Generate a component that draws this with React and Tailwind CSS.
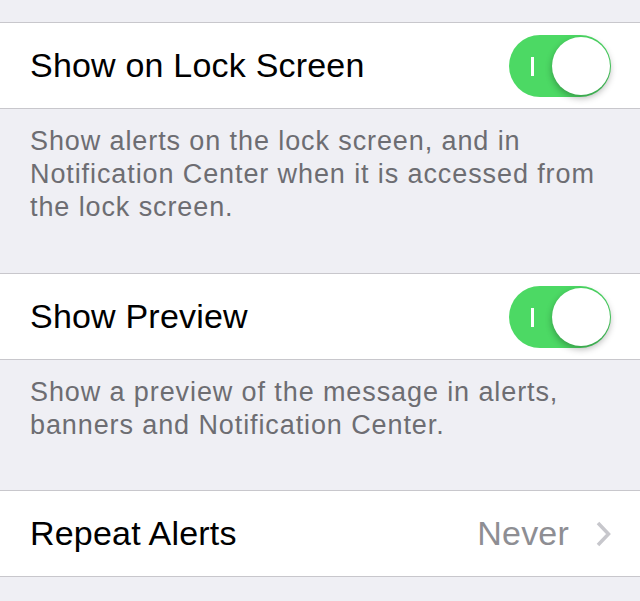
import React from 'react';

const font = { fontFamily: '"Liberation Sans", Arial, sans-serif' };

function Toggle() {
  return (
    <div className="relative w-[102px] h-[62px] rounded-full bg-[#4cd964] shrink-0">
      <div className="absolute left-[22px] top-[22px] w-[3px] h-[19px] bg-white" />
      <div className="absolute right-[1px] top-[2px] w-[58px] h-[58px] rounded-full bg-white shadow-[0_3px_7px_rgba(0,0,0,0.3)]" />
    </div>
  );
}

function Row({ label, children }) {
  return (
    <div className="flex items-center justify-between h-[87px] bg-white border-y border-[#c8c7cc] pl-[30px] pr-[30px]">
      <span className="text-[34px] text-black tracking-[0.2px]">{label}</span>
      {children}
    </div>
  );
}

function Footer({ children, h }) {
  return (
    <div className={`pl-[30px] pr-[20px] pt-[16px] ${h}`}>
      <p className="text-[27px] leading-[33px] tracking-[0.9px] text-[#6d6d72]">{children}</p>
    </div>
  );
}

export default function App() {
  return (
    <div className="w-[640px] h-[601px] bg-[#efeff4] overflow-hidden" style={font}>
      <div className="h-[22px]" />
      <Row label="Show on Lock Screen">
        <div className="-mr-[1px]"><Toggle /></div>
      </Row>
      <Footer h="h-[164px]">
        Show alerts on the lock screen, and in Notification Center when it is accessed from the lock screen.
      </Footer>
      <Row label="Show Preview">
        <div className="-mr-[1px]"><Toggle /></div>
      </Row>
      <Footer h="h-[130px]">
        Show a preview of the message in alerts, banners and Notification Center.
      </Footer>
      <Row label="Repeat Alerts">
        <div className="flex items-center gap-[27px] -mr-[1px]">
          <span className="text-[34px] text-[#8e8e93] tracking-[0.2px]">Never</span>
          <svg width="15" height="26" viewBox="0 0 15 26">
            <path d="M2 2 L12.5 13 L2 24" fill="none" stroke="#c7c7cc" strokeWidth="3.5" />
          </svg>
        </div>
      </Row>
    </div>
  );
}
